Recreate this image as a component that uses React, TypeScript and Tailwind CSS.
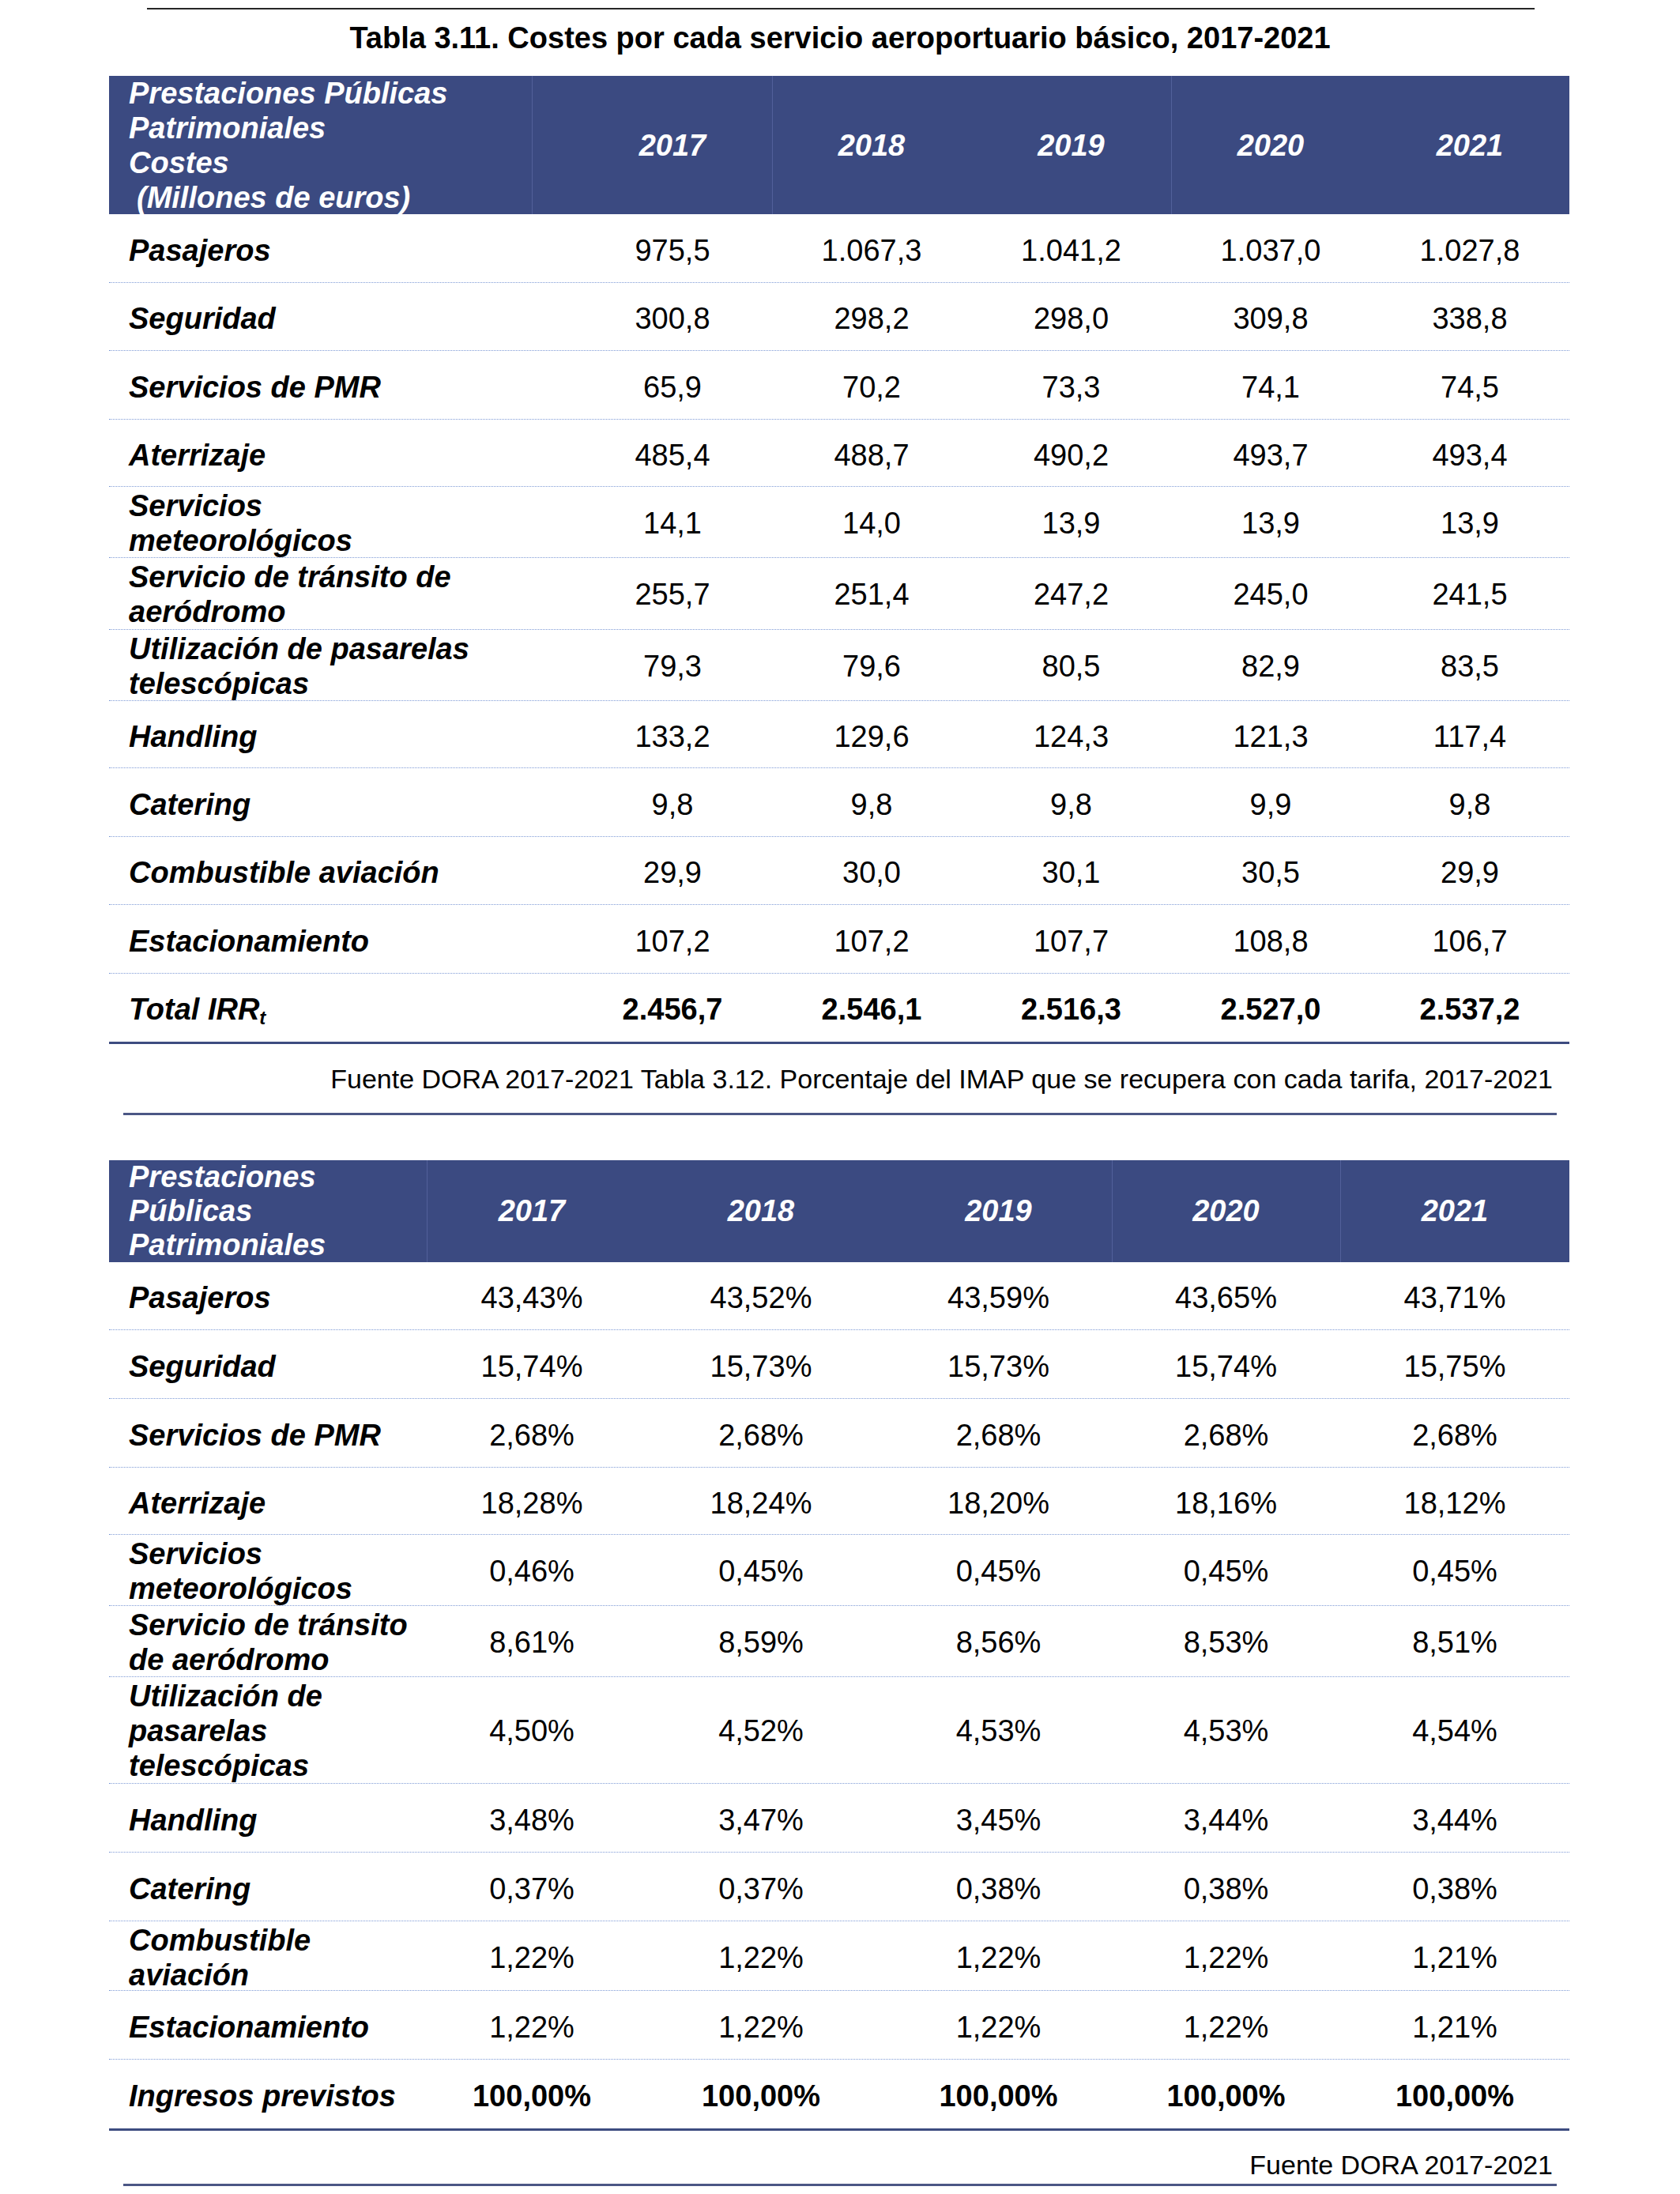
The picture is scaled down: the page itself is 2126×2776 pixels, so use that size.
const years = ['2017', '2018', '2019', '2020', '2021'];

type Row = {
  label: string[];
  values: string[];
  h: string;
  bold?: boolean;
};

const costRows: Row[] = [
  { label: ['Pasajeros'], values: ['975,5', '1.067,3', '1.041,2', '1.037,0', '1.027,8'], h: 'h-[87px]' },
  { label: ['Seguridad'], values: ['300,8', '298,2', '298,0', '309,8', '338,8'], h: 'h-[86px]' },
  { label: ['Servicios de PMR'], values: ['65,9', '70,2', '73,3', '74,1', '74,5'], h: 'h-[87px]' },
  { label: ['Aterrizaje'], values: ['485,4', '488,7', '490,2', '493,7', '493,4'], h: 'h-[85px]' },
  { label: ['Servicios', 'meteorológicos'], values: ['14,1', '14,0', '13,9', '13,9', '13,9'], h: 'h-[90px]' },
  { label: ['Servicio de tránsito de', 'aeródromo'], values: ['255,7', '251,4', '247,2', '245,0', '241,5'], h: 'h-[91px]' },
  { label: ['Utilización de pasarelas', 'telescópicas'], values: ['79,3', '79,6', '80,5', '82,9', '83,5'], h: 'h-[90px]' },
  { label: ['Handling'], values: ['133,2', '129,6', '124,3', '121,3', '117,4'], h: 'h-[85px]' },
  { label: ['Catering'], values: ['9,8', '9,8', '9,8', '9,9', '9,8'], h: 'h-[87px]' },
  { label: ['Combustible aviación'], values: ['29,9', '30,0', '30,1', '30,5', '29,9'], h: 'h-[86px]' },
  { label: ['Estacionamiento'], values: ['107,2', '107,2', '107,7', '108,8', '106,7'], h: 'h-[87px]' },
];

const pctRows: Row[] = [
  { label: ['Pasajeros'], values: ['43,43%', '43,52%', '43,59%', '43,65%', '43,71%'], h: 'h-[86px]' },
  { label: ['Seguridad'], values: ['15,74%', '15,73%', '15,73%', '15,74%', '15,75%'], h: 'h-[87px]' },
  { label: ['Servicios de PMR'], values: ['2,68%', '2,68%', '2,68%', '2,68%', '2,68%'], h: 'h-[87px]' },
  { label: ['Aterrizaje'], values: ['18,28%', '18,24%', '18,20%', '18,16%', '18,12%'], h: 'h-[85px]' },
  { label: ['Servicios', 'meteorológicos'], values: ['0,46%', '0,45%', '0,45%', '0,45%', '0,45%'], h: 'h-[90px]' },
  { label: ['Servicio de tránsito', 'de aeródromo'], values: ['8,61%', '8,59%', '8,56%', '8,53%', '8,51%'], h: 'h-[90px]' },
  { label: ['Utilización de', 'pasarelas', 'telescópicas'], values: ['4,50%', '4,52%', '4,53%', '4,53%', '4,54%'], h: 'h-[135px]' },
  { label: ['Handling'], values: ['3,48%', '3,47%', '3,45%', '3,44%', '3,44%'], h: 'h-[87px]' },
  { label: ['Catering'], values: ['0,37%', '0,37%', '0,38%', '0,38%', '0,38%'], h: 'h-[87px]' },
  { label: ['Combustible', 'aviación'], values: ['1,22%', '1,22%', '1,22%', '1,22%', '1,21%'], h: 'h-[88px]' },
  { label: ['Estacionamiento'], values: ['1,22%', '1,22%', '1,22%', '1,22%', '1,21%'], h: 'h-[87px]' },
  {
    label: ['Ingresos previstos'],
    values: ['100,00%', '100,00%', '100,00%', '100,00%', '100,00%'],
    h: 'h-[87px]',
    bold: true,
  },
];

// fila de datos, separador punteado abajo
function DataRow({ row, cols, last }: { row: Row; cols: string; last?: boolean }) {
  const multi = row.label.length > 1;
  return (
    <div
      className={`grid items-center ${cols} ${row.h} ${multi ? 'pt-[2px]' : 'pt-[5px]'} ${
        last ? '' : 'border-b border-dotted border-[#7f9bd6]'
      }`}
    >
      <div className="pl-[25px] text-[38px] leading-[44px] font-bold italic text-black">
        {row.label.map((l) => (
          <div key={l}>{l}</div>
        ))}
      </div>
      {row.values.map((v, i) => (
        <div
          key={i}
          className={`text-center text-[38px] leading-[44px] text-black ${row.bold ? 'font-bold' : ''}`}
        >
          {v}
        </div>
      ))}
    </div>
  );
}

const App = () => {
  const cols1 = 'grid-cols-[587px_252px_252px_253px_252px_252px]';
  const cols2 = 'grid-cols-[402px_266px_314px_287px_289px_290px]';

  return (
    <div className="w-[2126px] h-[2776px] bg-white font-['Liberation_Sans',Arial,sans-serif] pt-[10px]">
      <div className="ml-[186px] w-[1756px] h-[2px] bg-[#262626]" />

      <div className="mt-[14px] mb-[26px] text-center text-[38px] leading-[44px] font-bold text-black">
        Tabla 3.11. Costes por cada servicio aeroportuario básico, 2017-2021
      </div>

      {/* Tabla 3.11 */}
      <div className="ml-[138px] w-[1848px]">
        <div className={`relative grid h-[175px] items-center bg-[#3b4a81] ${cols1}`}>
          <div className="self-start pl-[25px] text-[38px] leading-[44px] font-bold italic text-white">
            <div>Prestaciones Públicas</div>
            <div>Patrimoniales</div>
            <div>Costes</div>
            <div className="pl-[10px]">(Millones de euros)</div>
          </div>
          {years.map((y) => (
            <div key={y} className="text-center text-[38px] font-bold italic text-white">
              {y}
            </div>
          ))}
          <div className="absolute top-0 bottom-0 left-[535px] w-px bg-[#52609a]" />
          <div className="absolute top-0 bottom-0 left-[839px] w-px bg-[#52609a]" />
          <div className="absolute top-0 bottom-0 left-[1344px] w-px bg-[#52609a]" />
        </div>

        {costRows.map((r) => (
          <DataRow key={r.label.join(' ')} row={r} cols={cols1} />
        ))}

        <div className={`grid h-[86px] items-center pt-[5px] ${cols1}`}>
          <div className="pl-[25px] text-[38px] font-bold italic text-black">
            Total IRR<sub className="text-[24px]">t</sub>
          </div>
          {['2.456,7', '2.546,1', '2.516,3', '2.527,0', '2.537,2'].map((v) => (
            <div key={v} className="text-center text-[38px] font-bold text-black">
              {v}
            </div>
          ))}
        </div>
        <div className="h-[3px] bg-[#3d4c80]" />
      </div>

      <div className="mt-[24px] pr-[161px] text-right text-[34px] leading-[40px] text-black">
        Fuente DORA 2017-2021 Tabla 3.12. Porcentaje del IMAP que se recupera con cada tarifa, 2017-2021
      </div>
      <div className="mt-[23px] ml-[156px] w-[1814px] h-[3px] bg-[#4b5785]" />

      {/* Tabla 3.12 */}
      <div className="mt-[57px] ml-[138px] w-[1848px]">
        <div className={`relative grid h-[129px] items-center bg-[#3b4a81] ${cols2}`}>
          <div className="pl-[25px] text-[38px] leading-[43px] font-bold italic text-white">
            <div>Prestaciones</div>
            <div>Públicas</div>
            <div>Patrimoniales</div>
          </div>
          {years.map((y) => (
            <div key={y} className="text-center text-[38px] font-bold italic text-white">
              {y}
            </div>
          ))}
          <div className="absolute top-0 bottom-0 left-[402px] w-px bg-[#52609a]" />
          <div className="absolute top-0 bottom-0 left-[1269px] w-px bg-[#52609a]" />
          <div className="absolute top-0 bottom-0 left-[1558px] w-px bg-[#52609a]" />
        </div>

        {pctRows.map((r, i) => (
          <DataRow key={r.label.join(' ')} row={r} cols={cols2} last={i === pctRows.length - 1} />
        ))}
        <div className="h-[3px] bg-[#3d4c80]" />
      </div>

      <div className="mt-[23px] pr-[161px] text-right text-[34px] leading-[40px] text-black">
        Fuente DORA 2017-2021
      </div>
      <div className="mt-[4px] ml-[156px] w-[1814px] h-[3px] bg-[#4b5785]" />
    </div>
  );
};

export default App;
